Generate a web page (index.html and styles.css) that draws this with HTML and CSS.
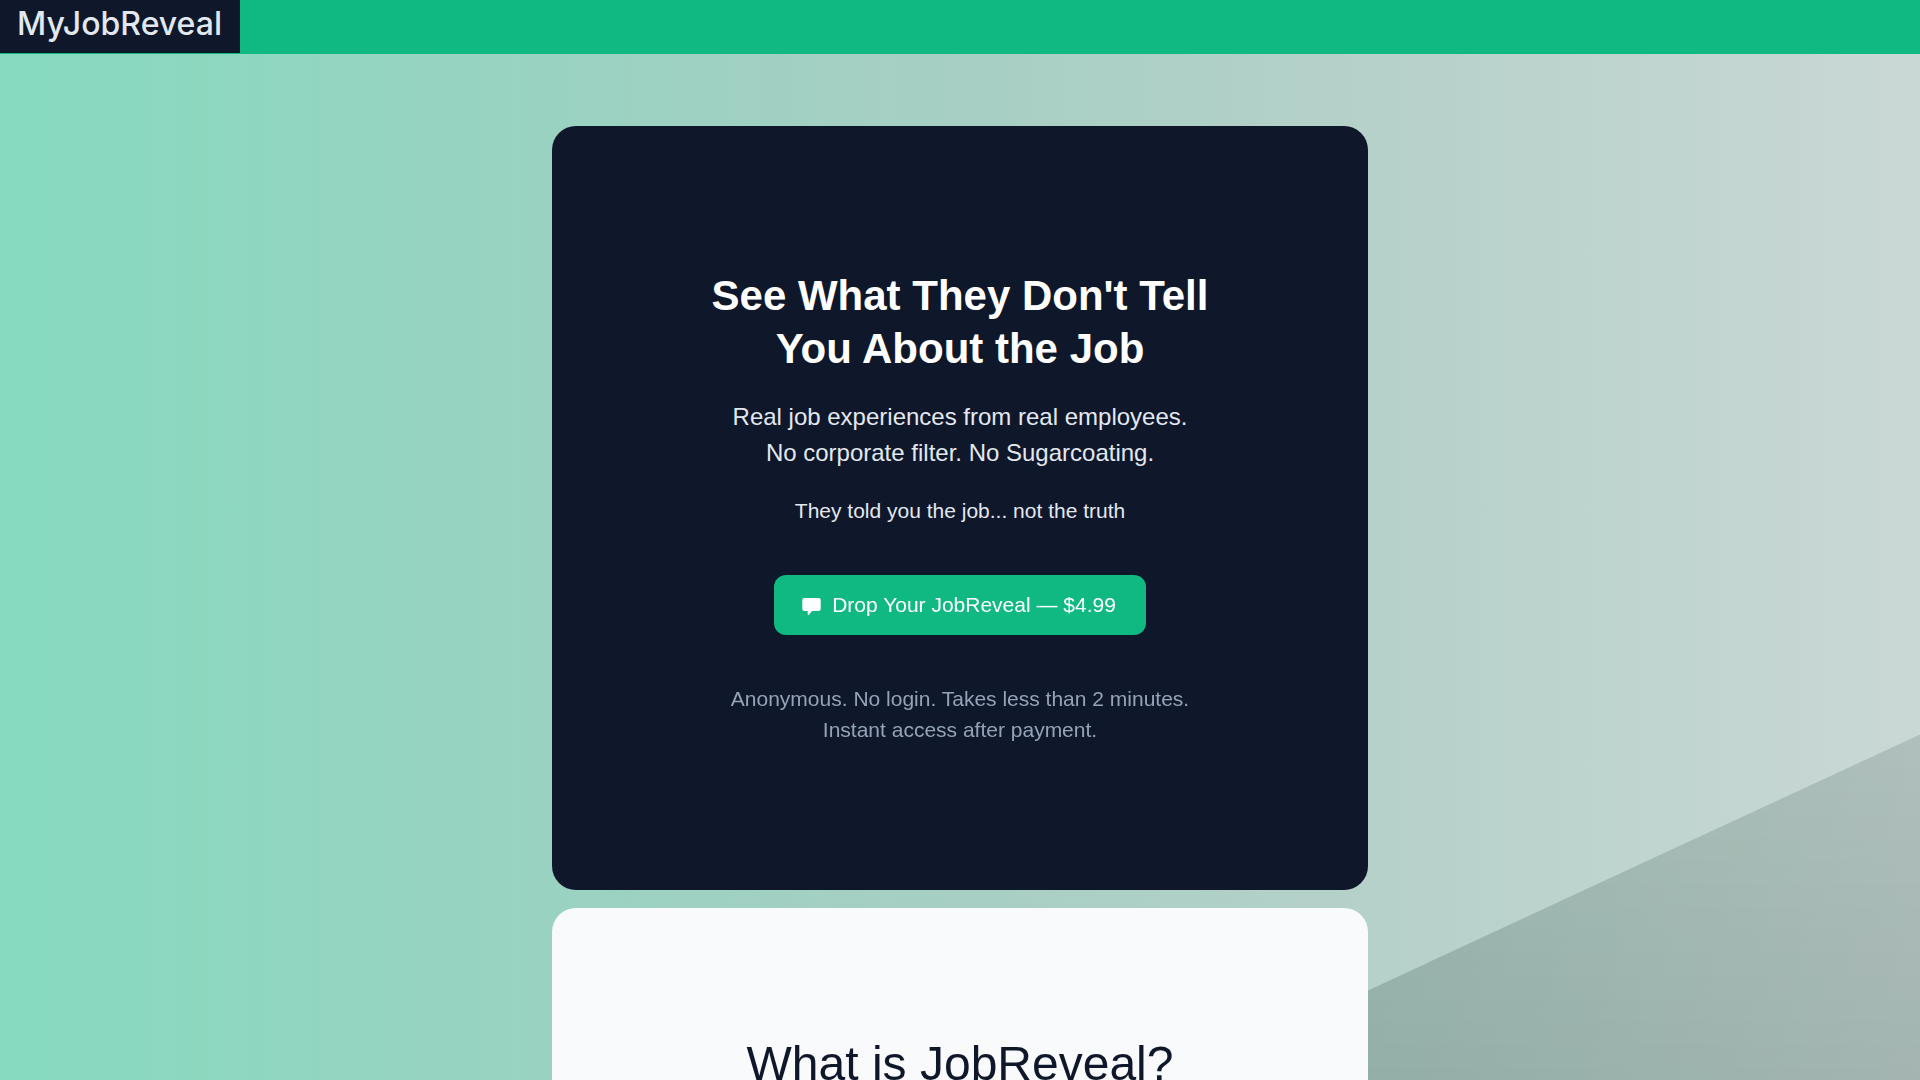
FILE: index.html
```html
<!DOCTYPE html>
<html lang="en">

<head>
  <meta charset="utf-8">
  <title>MyJobReveal</title>
  <meta name="viewport" content="width=device-width, initial-scale=1" />
  <link rel="stylesheet" href="styles.css">
</head>

<body>

  <header class="topbar">
    <a class="logo" href="#">MyJobReveal</a>
  </header>

  <main class="sections">
    <section class="card hero">
      <h1>See What They Don't Tell<br>You About the Job</h1>
      <p class="lead">Real job experiences from real employees.<br>No corporate filter. No Sugarcoating.</p>
      <p class="tagline">They told you the job... not the truth</p>
      <button class="cta" type="button">
        <svg class="cta-icon" viewBox="0 0 20 20" aria-hidden="true">
          <path d="M2.3 3h14.4q2 0 2 2v9q0 2-2 2H10l-3 3.8q-1.4.4-1.3-1V16H2.3q-2 0-2-2V5q0-2 2-2z" fill="currentColor" />
        </svg>
        Drop Your JobReveal — $4.99
      </button>
      <p class="note">Anonymous. No login. Takes less than 2 minutes.<br>Instant access after payment.</p>
    </section>

    <section class="card about">
      <h2>What is JobReveal?</h2>
    </section>
  </main>

</body>

</html>
```
FILE: styles.css
```css
* {
  box-sizing: border-box;
}

body {
  margin: 0;
  min-height: 100vh;
  font-family: "Liberation Sans", Arial, sans-serif;
  background: linear-gradient(90deg, #86dabf, #9ad2c1 29%, #a7cfc3 50%, #b5d1c9 71%, #cad8d5) fixed;
}

/* darker wedge in the bottom right corner */
body::before {
  content: "";
  position: fixed;
  inset: 0;
  z-index: -1;
  clip-path: polygon(100% 68%, 100% 100%, 61.2% 100%);
  background: linear-gradient(180deg, rgba(0, 30, 20, .13) 68%, rgba(0, 30, 25, .19));
}

h1,
h2,
p {
  margin: 0;
}

.topbar {
  display: flex;
  height: 54px;
  background-color: #10b981;
}

.logo {
  width: 240px;
  height: 53px;
  padding-left: 17px;
  background-color: #0f172a;
  color: #e2e8f0;
  font: 500 32px/48px Inter, sans-serif;
  text-decoration: none;
}

.sections {
  display: flex;
  flex-direction: column;
  gap: 18px;
  width: 90%;
  max-width: 816px;
  margin: 0 auto;
  padding-top: 72px;
}

.card {
  border-radius: 24px;
  text-align: center;
}

.hero {
  padding: 143px 24px 145px;
  background-color: #0f172a;
  color: #e2e8f0;
}

.hero h1 {
  margin-bottom: 24px;
  color: #fff;
  font-size: 42px;
  line-height: 53px;
}

.lead {
  margin-bottom: 24px;
  font-size: 24px;
  line-height: 36px;
}

.tagline {
  margin-bottom: 48px;
  font-size: 21px;
  line-height: 32px;
}

.cta {
  display: inline-flex;
  align-items: center;
  gap: 10px;
  height: 60px;
  margin-bottom: 48px;
  padding: 0 30px 0 28px;
  border: 0;
  border-radius: 12px;
  background-color: #10b981;
  color: #fff;
  font: inherit;
  font-size: 21px;
  cursor: pointer;
}

.cta-icon {
  width: 20px;
  height: 20px;
}

.note {
  color: #94a3b8;
  font-size: 21px;
  line-height: 31px;
}

.about {
  padding: 126px 24px;
  background-color: #f8fafc;
  color: #0f172a;
}

.about h2 {
  font-size: 48px;
  font-weight: 400;
  line-height: 60px;
}
```
